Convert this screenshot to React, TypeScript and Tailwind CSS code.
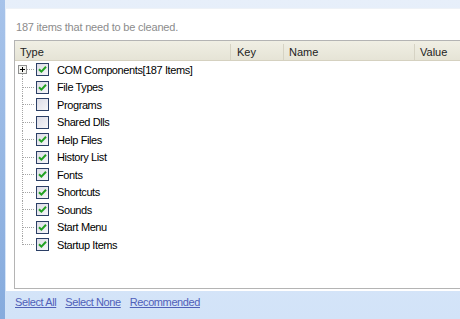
import React from 'react';

type Item = { label: string; checked: boolean };

const ITEMS: Item[] = [
  { label: 'COM Components[187 Items]', checked: true },
  { label: 'File Types', checked: true },
  { label: 'Programs', checked: false },
  { label: 'Shared Dlls', checked: false },
  { label: 'Help Files', checked: true },
  { label: 'History List', checked: true },
  { label: 'Fonts', checked: true },
  { label: 'Shortcuts', checked: true },
  { label: 'Sounds', checked: true },
  { label: 'Start Menu', checked: true },
  { label: 'Startup Items', checked: true },
];

function TreeGutter({ first, last }: { first: boolean; last: boolean }) {
  return (
    <svg width="21" height="17.5" className="shrink-0" shapeRendering="crispEdges">
      {/* vertical dotted line */}
      <line
        x1="7.5"
        x2="7.5"
        y1={first ? 13 : 0}
        y2={last ? 9 : 17.5}
        stroke="#a5a5a5"
        strokeDasharray="1 1"
      />
      <line x1={first ? 12 : 8} x2="20" y1="8.5" y2="8.5" stroke="#a5a5a5" strokeDasharray="1 1" />
      {first && (
        <>
          <rect x="3.5" y="4.5" width="8" height="8" fill="#f4f4f0" stroke="#8e8f8f" />
          <line x1="5" x2="10" y1="8.5" y2="8.5" stroke="#000" />
          <line x1="7.5" x2="7.5" y1="6" y2="11" stroke="#000" />
        </>
      )}
    </svg>
  );
}

function Check({ on }: { on: boolean }) {
  return (
    <span className="flex h-[13px] w-[13px] shrink-0 items-center justify-center border border-[#2b3f66] bg-gradient-to-br from-[#dcdce6] to-[#f6f6f8]">
      {on && (
        <svg width="9" height="9" viewBox="0 0 9 9">
          <path d="M1 4.2 L3.4 6.6 L8 1.8" fill="none" stroke="#21a121" strokeWidth="2" />
        </svg>
      )}
    </span>
  );
}

export default function App() {
  return (
    <div
      className="flex h-[319px] w-[460px] overflow-hidden bg-gradient-to-b from-[#e7effa] to-[#d2e3f8] text-[11px] text-black"
      style={{ fontFamily: '"Liberation Sans", Arial, sans-serif' }}
    >
      <div className="w-[5px] shrink-0 bg-gradient-to-b from-[#a7c3ea] to-[#86abdd]" />
      <div className="flex min-w-0 flex-1 flex-col pt-2 pl-px">
        {/* Panel */}
        <div className="flex h-[283px] flex-col border-t border-[#eef2f7] bg-white pl-2">
          <p className="ml-[2px] mt-[11px] h-[14px] leading-[14px] tracking-[-0.2px] text-[#8c8c8c]">
            187 items that need to be cleaned.
          </p>
          <div className="mt-[6px] flex h-[249px] w-[460px] flex-col border border-[#b4b4b4] bg-white">
            <div className="flex h-[20px] shrink-0 border-b border-[#d5d1c0] bg-gradient-to-b from-[#f0efe4] to-[#e6e4d6] pt-[3px] leading-[17px] text-[#222]">
              <div className="w-[215px] pl-[5px]">Type</div>
              <div className="w-[53px] border-l border-[#d6d3c4] pl-[6px]">Key</div>
              <div className="w-[131px] border-l border-[#d6d3c4] pl-[5px]">Name</div>
              <div className="flex-1 border-l border-[#d6d3c4] pl-[5px]">Value</div>
            </div>
            <div className="flex flex-col tracking-[-0.4px]">
              {ITEMS.map((it, i) => (
                <div key={it.label} className="flex h-[17.5px] items-center">
                  <TreeGutter first={i === 0} last={i === ITEMS.length - 1} />
                  <Check on={it.checked} />
                  <span className="ml-[8px] whitespace-nowrap">{it.label}</span>
                </div>
              ))}
            </div>
          </div>
        </div>
        {/* Footer links */}
        <div className="flex items-center gap-[9px] pl-[9px] pt-[3px] tracking-[-0.4px] text-[#5060b8]">
          <a className="underline underline-offset-1">Select All</a>
          <a className="underline underline-offset-1">Select None</a>
          <a className="underline underline-offset-1">Recommended</a>
        </div>
      </div>
    </div>
  );
}
